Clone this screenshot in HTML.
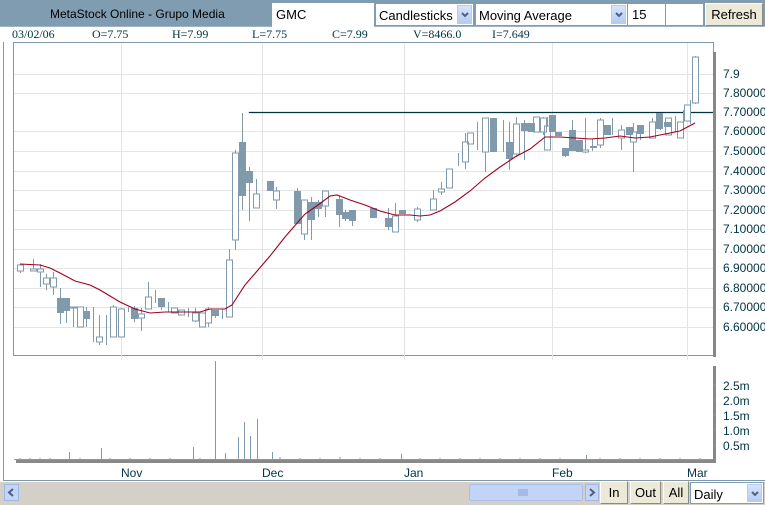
<!DOCTYPE html>
<html><head><meta charset="utf-8"><style>
body{margin:0;width:765px;height:505px;overflow:hidden;background:#fff;font-family:"Liberation Sans",sans-serif;position:relative}
.a{position:absolute;box-sizing:border-box}
.top{left:0;top:0;width:765px;height:27px;background:#7f9cb1;border-bottom:1px solid #9fb3c3}
.inp{background:#fff;border:1px solid #7f9db9;font-size:13px;padding:4px 0 0 4px;height:23px;top:3px}
.sel{background:#fff;border:1px solid #7f9db9;font-size:13px;padding:4px 0 0 3px;height:23px;top:3px}
.arr{position:absolute;right:1px;top:1px;width:15px;height:19px;background:linear-gradient(#d8e4fb,#b6cbf3);border:1px solid #b8cbf0;box-sizing:border-box}
.arr svg{position:absolute;left:3px;top:6px}
.btn{background:#ece9d8;border:1px solid #8c8a80;border-top-color:#fff;border-left-color:#fff;font-size:13px;text-align:center;color:#000}
.info{top:27px;font-family:"Liberation Serif",serif;font-size:12px;color:#003344}
</style></head><body>
<div class="a top"></div>
<div class="a" style="left:50px;top:7px;font-size:12px;color:#000">MetaStock Online - Grupo Media</div>
<div class="a inp" style="left:272px;width:102px;top:3px;height:24px;border:none">GMC</div>
<div class="a sel" style="left:375px;width:99px">Candlesticks<div class="arr"><svg width="8" height="6"><path d="M1 1L4 4L7 1" stroke="#4d6185" stroke-width="2" fill="none"/></svg></div></div>
<div class="a sel" style="left:475px;width:153px">Moving Average<div class="arr"><svg width="8" height="6"><path d="M1 1L4 4L7 1" stroke="#4d6185" stroke-width="2" fill="none"/></svg></div></div>
<div class="a inp" style="left:627px;width:39px;padding-top:3px">15</div>
<div class="a inp" style="left:665px;width:39px"></div>
<div class="a btn" style="left:705px;top:3px;width:58px;height:23px;line-height:21px">Refresh</div>
<div class="a info" style="left:12px">03/02/06</div>
<div class="a info" style="left:92px">O=7.75</div>
<div class="a info" style="left:172px">H=7.99</div>
<div class="a info" style="left:252px">L=7.75</div>
<div class="a info" style="left:332px">C=7.99</div>
<div class="a info" style="left:413px">V=8466.0</div>
<div class="a info" style="left:492px">I=7.649</div>

<svg class="a" style="left:0;top:0" width="765" height="505" font-family="Liberation Sans, sans-serif" font-size="12">
<line x1="3.5" y1="42" x2="3.5" y2="480" stroke="#7f99aa"/>
<line x1="3" y1="480.5" x2="765" y2="480.5" stroke="#7f99aa"/>
<rect x="13.5" y="42.5" width="700" height="313" fill="#fff" stroke="#7f99aa"/>
<rect x="713" y="52" width="3" height="305" fill="#888"/>
<g stroke="#e4e4e4">
<line x1="121.5" y1="43" x2="121.5" y2="460"/><line x1="262.5" y1="43" x2="262.5" y2="460"/><line x1="404.5" y1="43" x2="404.5" y2="460"/><line x1="552.5" y1="43" x2="552.5" y2="460"/><line x1="687.5" y1="43" x2="687.5" y2="460"/>
<line x1="14" y1="74.5" x2="713" y2="74.5"/><line x1="14" y1="93.5" x2="713" y2="93.5"/><line x1="14" y1="131.5" x2="713" y2="131.5"/><line x1="14" y1="151.5" x2="713" y2="151.5"/><line x1="14" y1="171.5" x2="713" y2="171.5"/><line x1="14" y1="190.5" x2="713" y2="190.5"/><line x1="14" y1="210.5" x2="713" y2="210.5"/><line x1="14" y1="229.5" x2="713" y2="229.5"/><line x1="14" y1="249.5" x2="713" y2="249.5"/><line x1="14" y1="268.5" x2="713" y2="268.5"/><line x1="14" y1="288.5" x2="713" y2="288.5"/><line x1="14" y1="307.5" x2="713" y2="307.5"/><line x1="14" y1="327.5" x2="713" y2="327.5"/>
</g>
<g fill="#003344">
<text x="723" y="78">7.9</text><text x="723" y="97">7.80000</text><text x="723" y="116">7.70000</text><text x="723" y="135">7.60000</text><text x="723" y="155">7.50000</text><text x="723" y="175">7.40000</text><text x="723" y="194">7.30000</text><text x="723" y="214">7.20000</text><text x="723" y="233">7.10000</text><text x="723" y="253">7.00000</text><text x="723" y="272">6.90000</text><text x="723" y="292">6.80000</text><text x="723" y="311">6.70000</text><text x="723" y="331">6.60000</text>
<text x="723" y="390">2.5m</text><text x="723" y="405">2.0m</text><text x="723" y="420">1.5m</text><text x="723" y="435">1.0m</text><text x="723" y="450">0.5m</text>
<text x="121" y="477">Nov</text><text x="262" y="477">Dec</text><text x="404" y="477">Jan</text><text x="552" y="477">Feb</text><text x="687" y="477">Mar</text>
</g>
<path d="M249.5 113V112.5H713" stroke="#003340" fill="none" stroke-width="1.3"/>
<g stroke="#8099ab" fill="#fff" stroke-width="1">
<path d="M20.5 264V273M33.5 259V271M40.5 264V287M46.5 274V290M53.5 272V295M60.5 288V324M66.5 298V323M73.5 307V327M86.5 307V327M93.5 307V342M99.5 315V345M106.5 315V345M113.5 305V337M121.5 308V336M128.5 307V312M134.5 306V322M141.5 308V331M148.5 282V309M155.5 290V303M161.5 298V310M168.5 302V312M188.5 308V317M195.5 308V322M208.5 307V327M215.5 310V318M222.5 309V319M229.5 249V317M235.5 150V250M242.5 113V210M249.5 167V221M256.5 179V200M276.5 187V209M297.5 188V224M304.5 200V240M311.5 197V240M318.5 200V217M325.5 191V217M339.5 196V227M345.5 210V221M352.5 210V226M388.5 208V230M395.5 203V232M417.5 207V222M433.5 190V210M441.5 182V195M458.5 153V166M465.5 133V169M477.5 122V150M485.5 118V172M503.5 120V152M509.5 122V170M516.5 117V157M524.5 120V160M543.5 117V135M547.5 117V150M565.5 148V157M572.5 120V151M585.5 118V153M592.5 139V151M600.5 118V148M612.5 118V135M621.5 125V150M633.5 123V172M640.5 125V140M652.5 118V138M660.5 113V130M668.5 118V135M675.5 116V132M683.5 110V130M690.5 100V124M695.5 56V104"/>
<path d="M17.5 265h6v6h-6zM30.5 269h6v2h-6zM37.5 269h6v3h-6zM43.5 278h6v6h-6zM50.5 278h6v9h-6zM70.5 307h6v1h-6zM77.5 307h6v20h-6zM96.5 337h6v5h-6zM110.5 307h6v30h-6zM118.5 309h6v28h-6zM138.5 314h6v4h-6zM145.5 297h6v12h-6zM171.5 308h6v5h-6zM178.5 310h6v5h-6zM192.5 313h6v8h-6zM199.5 313h6v14h-6zM205.5 309h6v14h-6zM226.5 260h6v57h-6zM232.5 153h6v87h-6zM253.5 194h6v14h-6zM273.5 191h6v9h-6zM301.5 200h6v34h-6zM322.5 191h6v15h-6zM392.5 216h6v16h-6zM414.5 209h6v11h-6zM430.5 199h6v11h-6zM438.5 189h6v3h-6zM446.5 169h6v19h-6zM462.5 142h6v20h-6zM467.5 133h6v11h-6zM482.5 118h6v34h-6zM513.5 124h6v30h-6zM533.5 117h6v15h-6zM540.5 118h6v14h-6zM544.5 126h6v24h-6zM582.5 150h6v2h-6zM597.5 120h6v25h-6zM618.5 130h6v8h-6zM630.5 132h6v10h-6zM649.5 122h6v16h-6zM665.5 118h6v17h-6zM677.5 122h6v16h-6zM684.5 105h6v16h-6zM692.5 57h6v46h-6z"/>
</g>
<g fill="#8099ab">
<rect x="57" y="298" width="7" height="15"/><rect x="63" y="298" width="7" height="13"/><rect x="83" y="311" width="7" height="8"/><rect x="131" y="308" width="7" height="11"/><rect x="158" y="298" width="7" height="9"/><rect x="212" y="310" width="7" height="6"/><rect x="239" y="142" width="7" height="54"/><rect x="246" y="171" width="7" height="12"/><rect x="267" y="181" width="7" height="10"/><rect x="294" y="191" width="7" height="33"/><rect x="308" y="202" width="7" height="18"/><rect x="315" y="202" width="7" height="7"/><rect x="336" y="199" width="7" height="16"/><rect x="342" y="212" width="7" height="7"/><rect x="349" y="210" width="7" height="11"/><rect x="370" y="208" width="7" height="10"/><rect x="385" y="218" width="7" height="9"/><rect x="399" y="210" width="7" height="4"/><rect x="490" y="118" width="7" height="34"/><rect x="506" y="142" width="7" height="17"/><rect x="521" y="123" width="7" height="8"/><rect x="528" y="123" width="7" height="9"/><rect x="549" y="115" width="7" height="17"/><rect x="555" y="132" width="7" height="4"/><rect x="562" y="148" width="7" height="8"/><rect x="569" y="130" width="7" height="21"/><rect x="576" y="140" width="7" height="12"/><rect x="590" y="146" width="7" height="2"/><rect x="604" y="125" width="7" height="10"/><rect x="626" y="127" width="7" height="8"/><rect x="637" y="125" width="7" height="9"/><rect x="656" y="113" width="7" height="16"/><rect x="664" y="122" width="7" height="5"/></g>
<polyline fill="none" stroke="#a0001e" stroke-width="1.1" points="20,264 40,265 50,268 60,273 75,281 90,285 100,290 120,302 135,309 150,313 165,312 180,312 200,312 210,309 225,309 232,305 245,285 258,270 270,256 285,237 298,222 305,214 318,205 330,196 337,195 350,200 365,205 380,211 395,215 410,215 420,216 430,215 440,211 455,202 470,191 485,178 500,167 515,157 530,149 545,137 560,137 575,138 590,139 605,138 620,136 635,138 650,137 665,134 680,131 695,123"/>
<rect x="14" y="360" width="699" height="100" fill="#fff"/>
<rect x="713" y="366" width="3" height="97" fill="#888"/>
<rect x="16" y="460" width="700" height="3" fill="#888"/>
<line x1="14" y1="459.5" x2="713" y2="459.5" stroke="#8099ab"/>
<g stroke="#8099ab"><line x1="215.5" y1="361" x2="215.5" y2="460"/><line x1="238.5" y1="437" x2="238.5" y2="460"/><line x1="244.5" y1="422" x2="244.5" y2="460"/><line x1="250.5" y1="436" x2="250.5" y2="460"/><line x1="257.5" y1="419" x2="257.5" y2="460"/><line x1="101.5" y1="448" x2="101.5" y2="460"/><line x1="69.5" y1="452" x2="69.5" y2="460"/><line x1="193.5" y1="447" x2="193.5" y2="460"/><line x1="225.5" y1="453" x2="225.5" y2="460"/><line x1="272.5" y1="452" x2="272.5" y2="460"/><line x1="401.5" y1="454" x2="401.5" y2="460"/><line x1="586.5" y1="455" x2="586.5" y2="460"/>
<path d="M20 460v-2M30 460v-2M40 460v-2M50 460v-2M80 460v-2M110 460v-2M130 460v-2M150 460v-2M170 460v-2M200 460v-2M280 460v-3M300 460v-2M320 460v-2M340 460v-3M360 460v-2M380 460v-2M420 460v-2M440 460v-2M460 460v-2M480 460v-2M500 460v-2M520 460v-2M540 460v-2M560 460v-2M600 460v-2M620 460v-2M640 460v-2M660 460v-2M680 460v-2M700 460v-2"/>
<path d="M713 385h3M713 400h3M713 415h3M713 430h3M713 446h3"/></g>
<rect x="0" y="482" width="765" height="23" fill="#d4d0c8"/>
<rect x="4.5" y="484.5" width="14" height="16" fill="#c5d5f5" stroke="#a0b8e8"/>
<path d="M13 489L9 492.5L13 496" stroke="#4d6185" stroke-width="2" fill="none"/>
<rect x="469.5" y="484.5" width="113" height="16" rx="2" fill="#c2d4f8" stroke="#a8bde8"/>
<path d="M519 489v7M521 489v7M523 489v7M525 489v7M527 489v7" stroke="#8aa2d0"/>
<rect x="585.5" y="484.5" width="13" height="16" fill="#c5d5f5" stroke="#a0b8e8"/>
<path d="M590 489L594 492.5L590 496" stroke="#4d6185" stroke-width="2" fill="none"/>
</svg>
<div class="a btn" style="left:600px;top:481px;width:28px;height:23px;line-height:21px">In</div>
<div class="a btn" style="left:630px;top:481px;width:31px;height:23px;line-height:21px">Out</div>
<div class="a btn" style="left:663px;top:481px;width:26px;height:23px;line-height:21px">All</div>
<div class="a sel" style="left:690px;top:482px;width:74px;height:22px;padding-top:4px">Daily<div class="arr" style="height:18px"><svg width="8" height="6"><path d="M1 1L4 4L7 1" stroke="#4d6185" stroke-width="2" fill="none"/></svg></div></div>
</body></html>
